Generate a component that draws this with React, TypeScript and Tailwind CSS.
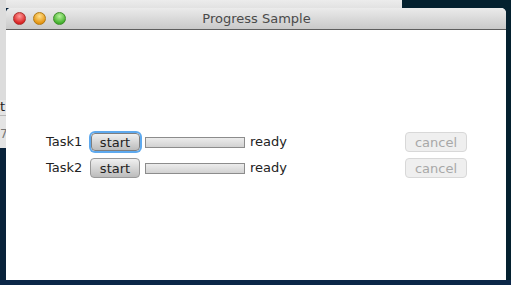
const FONT = { fontFamily: '"DejaVu Sans", "Liberation Sans", sans-serif' };

function Light({ from, to, border }: { from: string; to: string; border: string }) {
  return (
    <span
      className="block h-[13px] w-[13px] rounded-full border"
      style={{
        background: `radial-gradient(circle at 50% 30%, ${from} 0%, ${to} 75%)`,
        borderColor: border,
      }}
    />
  );
}

function Row({ label, focused }: { label: string; focused?: boolean }) {
  return (
    <div className="flex h-[26px] items-center">
      <span className="w-[43px] text-[13px] text-[#222]">{label}</span>
      <div className="flex w-[52px] justify-center">
        <button
          className={
            focused
              ? "h-[18px] w-[49px] rounded-[4px] border border-[#7e7e7e] bg-gradient-to-b from-[#f0f0f0] to-[#bcbcbc] text-[13px] leading-none text-[#222] shadow-[0_0_0_2px_#5ea9ee]"
              : "h-[20px] w-[50px] rounded-[4px] border border-[#999] bg-gradient-to-b from-[#f0f0f0] to-[#bcbcbc] text-[13px] leading-none text-[#222]"
          }
        >
          start
        </button>
      </div>
      <div className="ml-[4px] h-[11px] w-[100px] border border-[#8c8c8c] bg-gradient-to-b from-[#ececec] to-[#d2d2d2]" />
      <span className="ml-[5px] text-[13px] text-[#222]">ready</span>
      <div className="flex-1" />
      <button className="h-[20px] w-[62px] rounded-[4px] border border-[#d8d8d8] bg-[#efefef] text-[13px] leading-none text-[#a8a8a8]">
        cancel
      </button>
    </div>
  );
}

export default function App() {
  return (
    <div className="relative h-[285px] w-[511px] overflow-hidden bg-[#08223a]" style={FONT}>
      {/* desktop behind the window */}
      <div className="absolute left-0 top-0 h-[8px] w-[402px] bg-gradient-to-b from-[#ececec] to-[#e2e2e2]" />
      <div className="absolute left-[402px] top-0 h-[285px] w-[109px] bg-[#04212f]" />
      <div className="absolute left-0 top-0 flex h-[148px] w-[6px] flex-col bg-[#e4e4e4]">
        <div className="h-[100px] bg-[#dcdcdc]" />
        <span className="text-[13px] leading-[14px] text-[#222]">t</span>
        <div className="mt-[1px] h-px bg-[#b8b8b8]" />
        <span className="mt-[12px] text-[12px] leading-[12px] text-[#777]">7</span>
      </div>
      <div className="absolute bottom-0 left-0 h-[5px] w-[511px] bg-[#0b2748]" />

      {/* window */}
      <div className="absolute left-[6px] top-[8px] flex h-[272px] w-[500px] flex-col overflow-hidden rounded-t-[5px] bg-white">
        <div className="relative flex h-[22px] items-center border-b border-[#5e5e5e] bg-gradient-to-b from-[#ebebeb] to-[#c9c9c9] px-[7px]">
          <div className="flex gap-[7px]">
            <Light from="#ff9a9a" to="#d81f1f" border="#a8302f" />
            <Light from="#ffe08a" to="#e3920e" border="#b07a16" />
            <Light from="#b6f29a" to="#3fae2a" border="#3f8b2b" />
          </div>
          <span className="flex-1 pr-[52px] text-center text-[13px] text-[#4a4a4a]">Progress Sample</span>
        </div>
        <div className="flex flex-col pl-[40px] pr-[39px] pt-[99px]">
          <Row label="Task1" focused />
          <Row label="Task2" />
        </div>
      </div>
    </div>
  );
}
